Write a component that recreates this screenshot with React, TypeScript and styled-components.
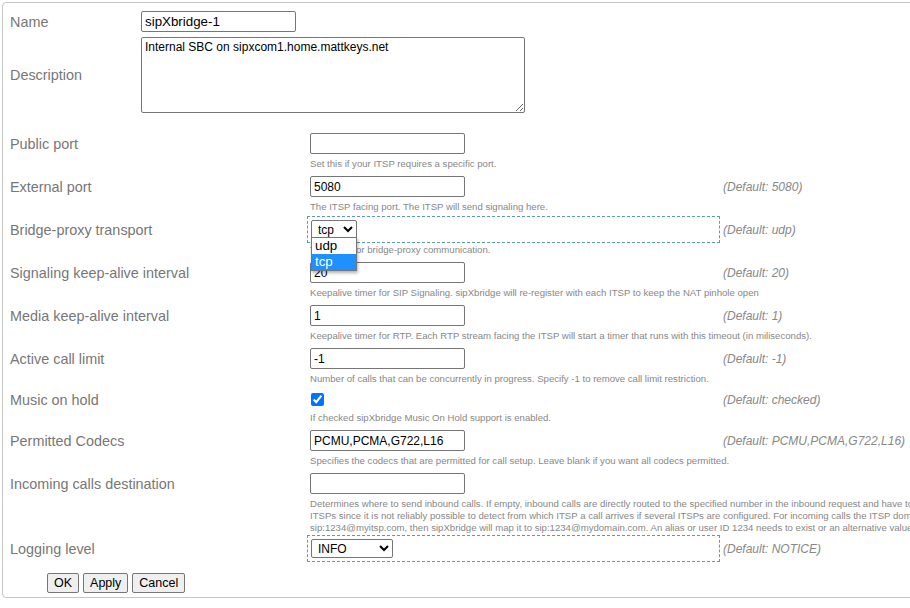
import React from "react";
import styled, { createGlobalStyle } from "styled-components";

const Global = createGlobalStyle`
  html, body { margin: 0; padding: 0; overflow: hidden; background: #fff; }
  body { font-family: "Liberation Sans", Arial, sans-serif; }
`;

const Frame = styled.div`
  margin: 2px 0 0 2px;
  width: 1200px;
  height: 596px;
  box-sizing: border-box;
  border: 1px solid #c6c6c6;
  border-radius: 4px;
  padding: 8px 0 0 7px;
`;

const TopGrid = styled.div`
  display: grid;
  grid-template-columns: 131px auto;
  row-gap: 5px;
  align-items: center;
  justify-items: start;
  margin-bottom: 17px;
`;

const Label = styled.div`
  font-size: 14.4px;
  color: #777;
  white-space: nowrap;
`;

const TextInput = styled.input<{ $w?: number; $fs?: number }>`
  box-sizing: border-box;
  width: ${(p) => p.$w ?? 155}px;
  height: 21px;
  margin: 0;
  padding: 1px 3px;
  border: 1px solid #767676;
  border-radius: 2px;
  font: ${(p) => p.$fs ?? 12}px "Liberation Sans", Arial, sans-serif;
  color: #000;
  background: #fff;
  outline: none;
`;

const TextArea = styled.textarea`
  box-sizing: border-box;
  display: block;
  width: 384px;
  height: 76px;
  margin: 0;
  padding: 2px 3px;
  border: 1px solid #767676;
  border-radius: 2px;
  font: 12px "Liberation Sans", Arial, sans-serif;
  color: #000;
  outline: none;
`;

const FieldRow = styled.div`
  display: grid;
  grid-template-columns: 297px 413px auto;
  align-items: center;
`;

const Ctl = styled.div<{ $dashed?: boolean; $h?: number }>`
  box-sizing: border-box;
  position: relative;
  display: flex;
  align-items: center;
  min-height: ${(p) => p.$h ?? 27}px;
  padding: 2px;
  border: 1px ${(p) => (p.$dashed ? "dashed #5f9ea0" : "solid transparent")};
`;

const DefaultText = styled.div`
  padding-left: 3px;
  font-size: 12px;
  font-style: italic;
  color: #888;
  white-space: nowrap;
`;

const Help = styled.div<{ $mb?: number }>`
  padding-left: 300px;
  margin: 1px 0 ${(p) => p.$mb ?? 3}px;
  font-size: 9.6px;
  line-height: 12px;
  color: #888;
  white-space: nowrap;
`;

const SelectWrap = styled.div`
  position: relative;
  display: inline-block;
  margin-left: 1px;
`;

const Select = styled.select<{ $w: number }>`
  box-sizing: border-box;
  width: ${(p) => p.$w}px;
  height: 19px;
  margin: 0;
  padding: 0 0 0 2px;
  border: 1px solid #767676;
  border-radius: 2px;
  font: 12px "Liberation Sans", Arial, sans-serif;
  color: #000;
  background: #fff;
  outline: none;
`;

const DropList = styled.div`
  position: absolute;
  z-index: 5;
  top: 17px;
  left: 0;
  width: 46px;
  box-sizing: border-box;
  border: 1px solid #767676;
  background: #fff;
  box-shadow: 1px 2px 3px rgba(0, 0, 0, 0.3);
`;

const DropOption = styled.div<{ $active?: boolean }>`
  height: 16px;
  padding-left: 3px;
  font: 13.33px/16px "Liberation Sans", Arial, sans-serif;
  color: ${(p) => (p.$active ? "#fff" : "#000")};
  background: ${(p) => (p.$active ? "#1e90ff" : "#fff")};
`;

const Check = styled.input`
  width: 13px;
  height: 13px;
  margin: 0 0 0 1px;
`;

const Buttons = styled.div`
  display: flex;
  gap: 4px;
  margin: 11px 0 0 37px;
`;

const Button = styled.button`
  box-sizing: border-box;
  height: 20px;
  padding: 0 6px;
  border: 1px solid #767676;
  border-radius: 2px;
  background: #efefef;
  font: 12.5px "Liberation Sans", Arial, sans-serif;
  color: #000;
`;

type FieldProps = {
  label: string;
  help?: React.ReactNode;
  helpGap?: number;
  def?: string;
  dashed?: boolean;
  h?: number;
  children: React.ReactNode;
};

function Field({ label, help, helpGap, def, dashed, h, children }: FieldProps) {
  return (
    <>
      <FieldRow>
        <Label>{label}</Label>
        <Ctl $dashed={dashed} $h={h}>
          {children}
        </Ctl>
        <DefaultText>{def}</DefaultText>
      </FieldRow>
      {help && <Help $mb={helpGap}>{help}</Help>}
    </>
  );
}

export default function App() {
  return (
    <>
      <Global />
      <Frame>
        <TopGrid>
          <Label>Name</Label>
          <TextInput $fs={13.33} defaultValue="sipXbridge-1" />
          <Label>Description</Label>
          <TextArea defaultValue="Internal SBC on sipxcom1.home.mattkeys.net" />
        </TopGrid>

        <Field label="Public port" help="Set this if your ITSP requires a specific port.">
          <TextInput />
        </Field>
        <Field
          label="External port"
          def="(Default: 5080)"
          help="The ITSP facing port. The ITSP will send signaling here."
        >
          <TextInput defaultValue="5080" />
        </Field>
        <Field
          label="Bridge-proxy transport"
          def="(Default: udp)"
          dashed
          help="Transport for bridge-proxy communication."
        >
          <SelectWrap>
            <Select $w={46} defaultValue="tcp">
              <option value="udp">udp</option>
              <option value="tcp">tcp</option>
            </Select>
            <DropList>
              <DropOption>udp</DropOption>
              <DropOption $active>tcp</DropOption>
            </DropList>
          </SelectWrap>
        </Field>
        <Field
          label="Signaling keep-alive interval"
          def="(Default: 20)"
          help="Keepalive timer for SIP Signaling. sipXbridge will re-register with each ITSP to keep the NAT pinhole open"
        >
          <TextInput defaultValue="20" />
        </Field>
        <Field
          label="Media keep-alive interval"
          def="(Default: 1)"
          help="Keepalive timer for RTP. Each RTP stream facing the ITSP will start a timer that runs with this timeout (in miliseconds)."
        >
          <TextInput defaultValue="1" />
        </Field>
        <Field
          label="Active call limit"
          def="(Default: -1)"
          help="Number of calls that can be concurrently in progress. Specify -1 to remove call limit restriction."
        >
          <TextInput defaultValue="-1" />
        </Field>
        <Field
          label="Music on hold"
          def="(Default: checked)"
          h={23}
          help="If checked sipXbridge Music On Hold support is enabled."
        >
          <Check type="checkbox" defaultChecked />
        </Field>
        <Field
          label="Permitted Codecs"
          def="(Default: PCMU,PCMA,G722,L16)"
          help="Specifies the codecs that are permitted for call setup. Leave blank if you want all codecs permitted."
        >
          <TextInput defaultValue="PCMU,PCMA,G722,L16" />
        </Field>
        <Field
          label="Incoming calls destination"
          helpGap={1}
          help={
            <>
              Determines where to send inbound calls. If empty, inbound calls are directly routed to the specified number in the inbound request and have to be resolved locally. Set this if you use several
              <br />
              ITSPs since it is not reliably possible to detect from which ITSP a call arrives if several ITSPs are configured. For incoming calls the ITSP domain is replaced, e.g. a call to
              <br />
              sip:1234@myitsp.com, then sipXbridge will map it to sip:1234@mydomain.com. An alias or user ID 1234 needs to exist or an alternative value must be entered here.
            </>
          }
        >
          <TextInput />
        </Field>
        <Field label="Logging level" def="(Default: NOTICE)" dashed>
          <SelectWrap>
            <Select $w={82} defaultValue="INFO">
              <option>DEBUG</option>
              <option>INFO</option>
              <option>NOTICE</option>
              <option>WARNING</option>
              <option>ERR</option>
              <option>CRIT</option>
            </Select>
          </SelectWrap>
        </Field>

        <Buttons>
          <Button>OK</Button>
          <Button>Apply</Button>
          <Button>Cancel</Button>
        </Buttons>
      </Frame>
    </>
  );
}
